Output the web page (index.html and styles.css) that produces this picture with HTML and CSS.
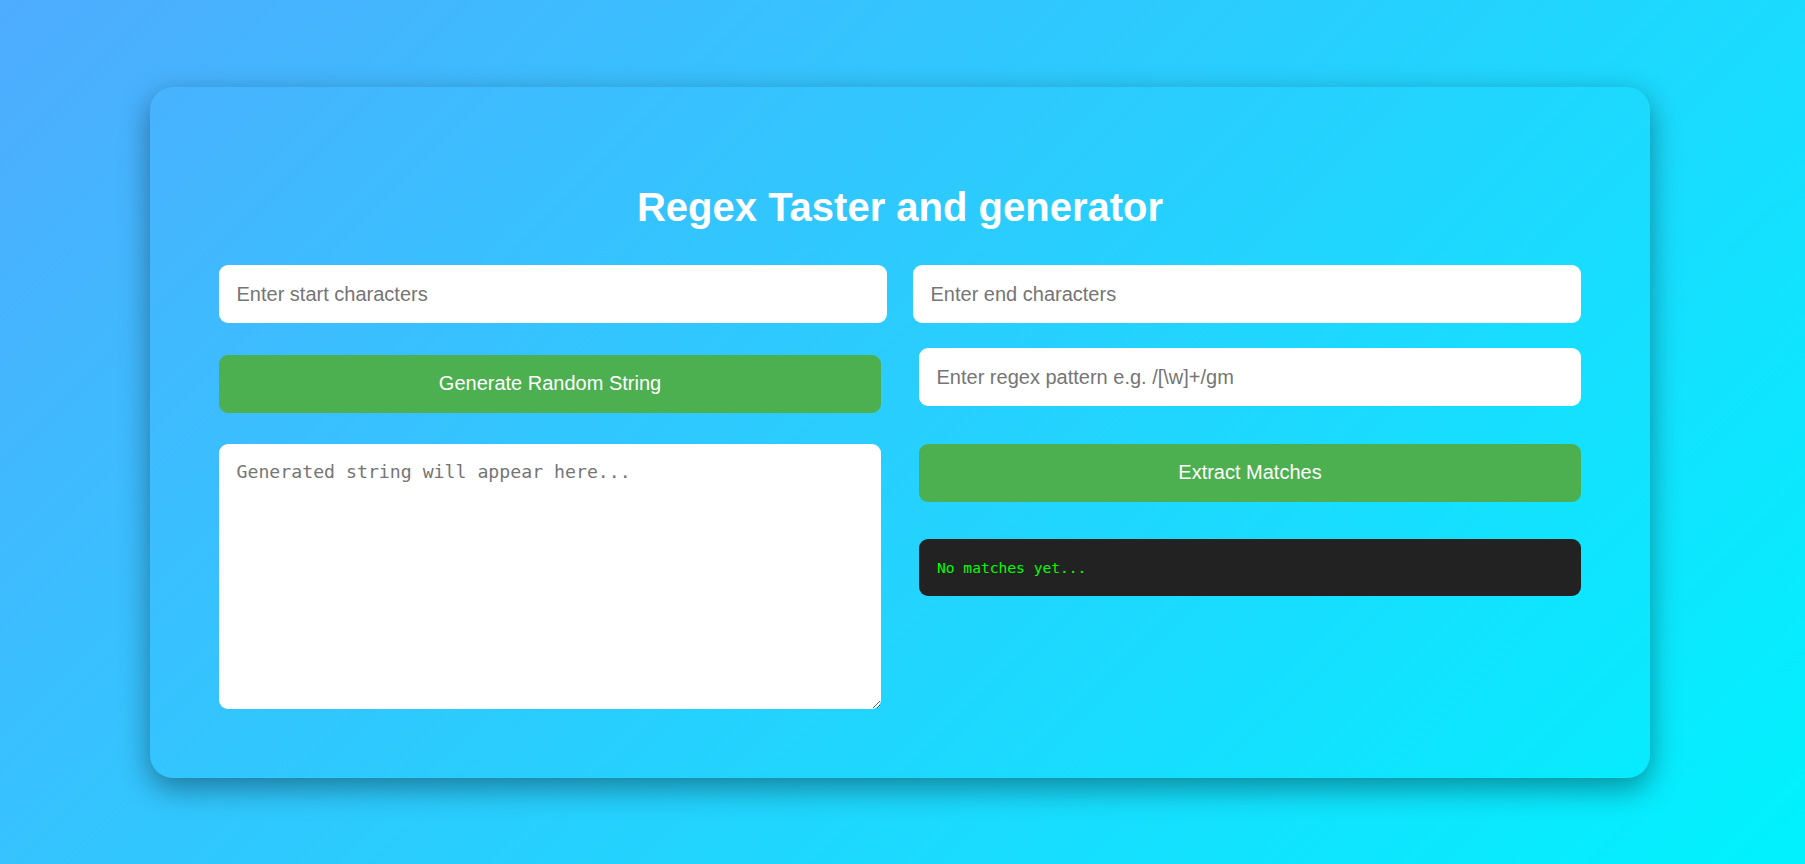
FILE: index.html
```html
<!DOCTYPE html>
<html lang="en">
<head>
<meta charset="utf-8">
<title>Regex Taster and generator</title>
<link rel="stylesheet" href="styles.css">
</head>
<body>
  <div class="card">
    <h1 class="title">Regex Taster and generator</h1>
    <div class="row-inputs">
      <input class="field" type="text" placeholder="Enter start characters">
      <input class="field" type="text" placeholder="Enter end characters">
    </div>
    <div class="row-main">
      <div class="col col-left">
        <button class="btn btn-generate">Generate Random String</button>
        <textarea class="output-text" placeholder="Generated string will appear here..."></textarea>
      </div>
      <div class="col col-right">
        <input class="field" type="text" placeholder="Enter regex pattern e.g. /[\w]+/gm">
        <button class="btn btn-extract">Extract Matches</button>
        <div class="matches">No matches yet...</div>
      </div>
    </div>
  </div>
</body>
</html>
```

FILE: styles.css
```css
html, body {
  margin: 0;
  padding: 0;
}

body {
  min-height: 100vh;
  box-sizing: border-box;
  padding-right: 5px;
  display: flex;
  align-items: center;
  justify-content: center;
  background: linear-gradient(135deg, #4facfe 0%, #00f2fe 100%);
  font-family: "Liberation Sans", Arial, sans-serif;
}

.card {
  width: 1500px;
  box-sizing: border-box;
  padding: 69px;
  border-radius: 23px;
  box-shadow: 0 10px 30px rgba(0, 0, 0, 0.4);
}

.title {
  margin: 28px 0 35px;
  font-size: 40px;
  line-height: 46px;
  font-weight: bold;
  color: #ffffff;
  text-align: center;
}

.row-inputs {
  display: grid;
  grid-template-columns: 1fr 1fr;
  gap: 26px;
}

.field {
  display: block;
  width: 100%;
  height: 58px;
  box-sizing: border-box;
  padding: 1px 17.5px 0;
  border: none;
  border-radius: 9px;
  background: #ffffff;
  font-family: "Liberation Sans", Arial, sans-serif;
  font-size: 20px;
  color: #333;
  outline: none;
}

.field::placeholder,
.output-text::placeholder {
  color: #757575;
  opacity: 1;
}

.row-main {
  margin-top: 25px;
  display: grid;
  grid-template-columns: 1fr 1fr;
  gap: 38px;
}

.col {
  display: flex;
  flex-direction: column;
}

.col-left {
  padding-top: 7px;
  gap: 31px;
}

.col-right {
  gap: 38px;
}

.btn {
  display: block;
  width: 100%;
  height: 58px;
  border: none;
  border-radius: 9px;
  background: #4caf50;
  color: #ffffff;
  font-family: "Liberation Sans", Arial, sans-serif;
  font-size: 20px;
  cursor: pointer;
}

.output-text {
  display: block;
  width: 100%;
  height: 265px;
  box-sizing: border-box;
  padding: 17.5px;
  border: none;
  border-radius: 9px;
  background: #ffffff;
  font-family: "DejaVu Sans Mono", monospace;
  font-size: 18.2px;
  color: #333;
  outline: none;
}

.matches {
  height: 57px;
  box-sizing: border-box;
  margin-top: -1px;
  padding: 0 18px;
  display: flex;
  align-items: center;
  border-radius: 9px;
  background: #222222;
  color: #00ff00;
  font-family: "DejaVu Sans Mono", monospace;
  font-size: 14.6px;
}
```
